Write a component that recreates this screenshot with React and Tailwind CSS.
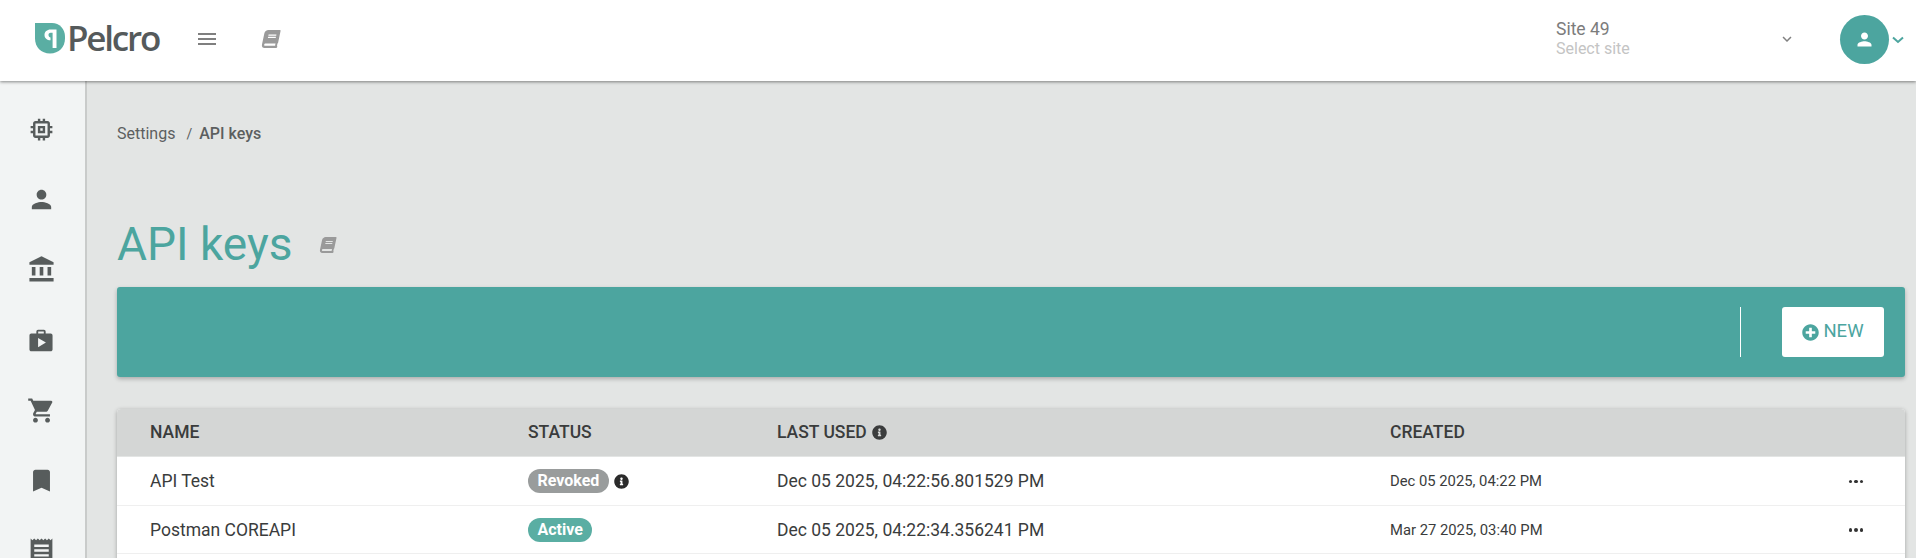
import React from "react";
import { MdMemory, MdPerson, MdAccountBalance, MdShoppingCart, MdBookmark, MdReceipt, MdMenu, MdKeyboardArrowDown } from "react-icons/md";
import { FaBook, FaInfoCircle, FaPlusCircle } from "react-icons/fa";

const Briefcase = () => (
  <svg width="28" height="28" viewBox="0 0 24 24" fill="#575c5c">
    <path fillRule="evenodd" d="M9.5 3.2h5A1.5 1.5 0 0 1 16 4.7v1.8h4.3c.9 0 1.6.7 1.6 1.6v12c0 .9-.7 1.6-1.6 1.6H3.7c-.9 0-1.6-.7-1.6-1.6v-12c0-.9.7-1.6 1.6-1.6H8V4.7a1.5 1.5 0 0 1 1.5-1.5zM9.6 4.8v1.7h4.8V4.8zM9.5 10.2v8l6.7-4z" />
  </svg>
);

const Logo = () => (
  <svg width="30" height="31" viewBox="0 0 30 31">
    <path d="M0 0H17C24.500 0 30 6 30 13.500V15.500C30 24 24 30.500 15 30.500C6 30.500 0 24 0 15.500Z" fill="#5aaea3" />
    <path d="M15.500 6.500H21.500V25H17.600V9.800H15.500C14.200 9.800 13.500 10.800 13.500 12C13.500 13.500 14.500 14.300 15.500 14.500V17.300C12 17.300 9.500 15.200 9.500 12C9.500 8.800 12 6.500 15.500 6.500Z" fill="#fff" />
  </svg>
);

const TealChevron = () => (
  <svg width="12" height="8" viewBox="0 0 12 8" fill="none" stroke="#4ca59f" strokeWidth="2" className="ml-[3px]">
    <path d="M1 1.500L6 6L11 1.500" />
  </svg>
);

const rows = [
  { name: "API Test", status: "Revoked", used: "Dec 05 2025, 04:22:56.801529 PM", created: "Dec 05 2025, 04:22 PM" },
  { name: "Postman COREAPI", status: "Active", used: "Dec 05 2025, 04:22:34.356241 PM", created: "Mar 27 2025, 03:40 PM" },
];

const side = [
  <MdMemory size={29} color="#575c5c" />,
  <MdPerson size={29} color="#575c5c" />,
  <MdAccountBalance size={29} color="#575c5c" />,
  <Briefcase />,
  <MdShoppingCart size={29} color="#575c5c" />,
  <MdBookmark size={29} color="#575c5c" />,
  <MdReceipt size={29} color="#575c5c" />,
];

export default function App() {
  return (
    <div className="h-[558px] w-[1916px] overflow-hidden bg-[#e3e5e4] font-['Roboto',sans-serif] flex flex-col">
      <header className="relative z-20 h-[81px] shrink-0 bg-white flex items-center shadow-[0_1px_3px_rgba(0,0,0,0.45)]">
        <div className="w-[195px] shrink-0 pl-[35px] flex items-center gap-[2px] -mt-[4px]">
          <Logo />
          <span className="font-['Open_Sans',sans-serif] font-semibold text-[35px] leading-none tracking-[-2.2px] text-[#555a5b] -mt-[3px]">Pelcro</span>
        </div>
        <div className="w-[50px] shrink-0 flex -mt-[3px]"><MdMenu size={24} color="#7f7f7f" /></div>
        <div className="shrink-0 -mt-[3px] ml-[17px]"><FaBook size={18} color="#9a9a9a" className="-skew-x-12" /></div>
        <div className="ml-[1276px] w-[236px] shrink-0 flex items-center justify-between -mt-[4px]">
          <div className="flex flex-col">
            <span className="text-[17.500px] leading-[20px] text-[#7c7c7c]">Site 49</span>
            <span className="text-[16px] leading-[20px] text-[#c4c4c4]">Select site</span>
          </div>
          <MdKeyboardArrowDown size={18} color="#808080" className="mr-[-4px] mt-[1px]" />
        </div>
        <div className="ml-[48px] flex items-center shrink-0 -mt-[2px]">
          <div className="w-[49px] h-[49px] rounded-full bg-[#4ca59f] flex items-center justify-center">
            <MdPerson size={21} color="#fff" />
          </div>
          <TealChevron />
        </div>
      </header>
      <div className="flex flex-1 min-h-0">
        <aside className="relative z-10 w-[87px] shrink-0 bg-[#f2f4f4] border-r-2 border-[#c9cbca] flex flex-col items-center pt-[13px]">
          {side.map((icon, i) => (
            <div key={i} className="h-[70.300px] w-full flex items-center justify-center shrink-0 pr-[3px]">{icon}</div>
          ))}
        </aside>
        <main className="flex-1 min-w-0 pl-[30px] pr-[11px]">
          <div className="h-[32px] mt-[37px] flex items-center text-[16px] text-[#5c5f5f]">
            <span>Settings</span>
            <span className="ml-[11px] mr-[7px] text-[14px]">/</span>
            <span className="font-medium">API keys</span>
          </div>
          <div className="mt-[67px] h-[54px] flex items-center">
            <h1 className="text-[46px] leading-[54px] font-normal text-[#4ca59f]">API keys</h1>
            <FaBook size={16} color="#9a9a9a" className="ml-[28px] mt-[2px] -skew-x-12" />
          </div>
          <div className="mt-[16px] h-[90px] rounded-[3px] bg-[#4ca59f] shadow-[0_2px_4px_rgba(0,0,0,0.25)] flex items-center justify-end pr-[21px]">
            <div className="w-[1.500px] h-[50px] bg-white mr-[41px]"></div>
            <button className="w-[102px] h-[50px] bg-white rounded-[3px] flex items-center justify-center gap-[4px] text-[#4ca59f] text-[18.500px]">
              <FaPlusCircle size={17} />
              <span>NEW</span>
            </button>
          </div>
          <div className="mt-[32px] rounded-t-[4px] overflow-hidden bg-white shadow-[0_1px_4px_rgba(0,0,0,0.3)]">
            <div className="h-[48px] bg-[#d4d6d5] flex items-center text-[17.500px] font-medium text-[#3a3c3c] border-b border-[#e3e5e4]">
              <div className="w-[411px] pl-[33px] shrink-0">NAME</div>
              <div className="w-[249px] shrink-0">STATUS</div>
              <div className="w-[613px] flex items-center gap-[5px] shrink-0">LAST USED <FaInfoCircle size={15} /></div>
              <div>CREATED</div>
            </div>
            {rows.map((r) => (
              <div key={r.name} className="h-[48.500px] pt-[1px] flex items-center text-[17.500px] text-[#3a3c3c] border-b border-[#efefef]">
                <div className="w-[411px] pl-[33px] shrink-0">{r.name}</div>
                <div className="w-[249px] flex items-center gap-[5px] shrink-0">
                  {r.status === "Revoked" ? (
                    <>
                      <span className="h-[24px] px-[9.500px] rounded-full bg-[#999c9c] text-white text-[16px] font-bold leading-[24px]">Revoked</span>
                      <FaInfoCircle size={15} color="#2b2b2b" />
                    </>
                  ) : (
                    <span className="h-[24px] px-[9.500px] rounded-full bg-[#5aaea3] text-white text-[16px] font-bold leading-[24px]">Active</span>
                  )}
                </div>
                <div className="w-[613px] shrink-0">{r.used}</div>
                <div className="w-[456px] text-[14.800px] shrink-0">{r.created}</div>
                <div className="w-[20px] flex justify-center gap-[2px]">
                  <span className="w-[3.500px] h-[3.500px] rounded-full bg-[#333]"></span>
                  <span className="w-[3.500px] h-[3.500px] rounded-full bg-[#333]"></span>
                  <span className="w-[3.500px] h-[3.500px] rounded-full bg-[#333]"></span>
                </div>
              </div>
            ))}
            <div className="h-[48px]"></div>
          </div>
        </main>
      </div>
    </div>
  );
}
